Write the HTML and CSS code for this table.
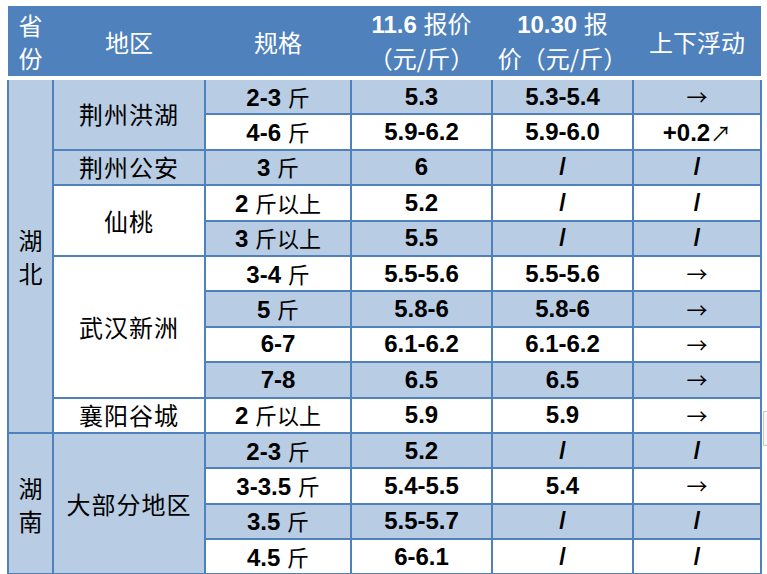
FILE: index.html
```html
<!DOCTYPE html>
<html lang="zh">
<head>
<meta charset="utf-8">
<title>报价表</title>
<link rel="stylesheet" href="styles.css">
</head>
<body>
<table class="price">
  <colgroup>
    <col class="c1"><col class="c2"><col class="c3"><col class="c4"><col class="c5"><col class="c6">
  </colgroup>
  <thead>
    <tr>
      <th class="cn">省<br>份</th>
      <th class="cn">地区</th>
      <th class="cn">规格</th>
      <th><b>11.6</b> <span class="cn">报价</span><br><span class="cn">（元/斤）</span></th>
      <th><b>10.30</b> <span class="cn">报</span><br><span class="cn">价（元/斤）</span></th>
      <th class="cn">上下浮动</th>
    </tr>
  </thead>
  <tbody>
    <tr class="b">
      <td rowspan="10" class="prov cn">湖<br>北</td>
      <td rowspan="2" class="area cn">荆州洪湖</td>
      <td>2-3 <span class="cn">斤</span></td><td>5.3</td><td>5.3-5.4</td><td><span class="arr">→</span></td>
    </tr>
    <tr class="w">
      <td>4-6 <span class="cn">斤</span></td><td>5.9-6.2</td><td>5.9-6.0</td><td>+0.2<span class="arr">↗</span></td>
    </tr>
    <tr class="b">
      <td class="area cn">荆州公安</td>
      <td>3 <span class="cn">斤</span></td><td>6</td><td>/</td><td>/</td>
    </tr>
    <tr class="w">
      <td rowspan="2" class="area wbg cn">仙桃</td>
      <td>2 <span class="cn">斤以上</span></td><td>5.2</td><td>/</td><td>/</td>
    </tr>
    <tr class="b">
      <td>3 <span class="cn">斤以上</span></td><td>5.5</td><td>/</td><td>/</td>
    </tr>
    <tr class="w">
      <td rowspan="4" class="area wbg cn">武汉新洲</td>
      <td>3-4 <span class="cn">斤</span></td><td>5.5-5.6</td><td>5.5-5.6</td><td><span class="arr">→</span></td>
    </tr>
    <tr class="b">
      <td>5 <span class="cn">斤</span></td><td>5.8-6</td><td>5.8-6</td><td><span class="arr">→</span></td>
    </tr>
    <tr class="w">
      <td>6-7</td><td>6.1-6.2</td><td>6.1-6.2</td><td><span class="arr">→</span></td>
    </tr>
    <tr class="b">
      <td>7-8</td><td>6.5</td><td>6.5</td><td><span class="arr">→</span></td>
    </tr>
    <tr class="w">
      <td class="area cn">襄阳谷城</td>
      <td>2 <span class="cn">斤以上</span></td><td>5.9</td><td>5.9</td><td><span class="arr">→</span></td>
    </tr>
    <tr class="b">
      <td rowspan="4" class="prov cn">湖<br>南</td>
      <td rowspan="4" class="area cn">大部分地区</td>
      <td>2-3 <span class="cn">斤</span></td><td>5.2</td><td>/</td><td>/</td>
    </tr>
    <tr class="w">
      <td>3-3.5 <span class="cn">斤</span></td><td>5.4-5.5</td><td>5.4</td><td><span class="arr">→</span></td>
    </tr>
    <tr class="b">
      <td>3.5 <span class="cn">斤</span></td><td>5.5-5.7</td><td>/</td><td>/</td>
    </tr>
    <tr class="w">
      <td>4.5 <span class="cn">斤</span></td><td>6-6.1</td><td>/</td><td>/</td>
    </tr>
  </tbody>
</table>
<div class="side-tab"></div>
</body>
</html>
```

FILE: styles.css
```css
html, body {
  margin: 0;
  padding: 0;
  background: #ffffff;
}

body {
  position: relative;
  width: 767px;
  height: 574px;
  overflow: hidden;
}

.price {
  margin: 6px 0 0 7px;
  width: 753px;
  table-layout: fixed;
  border-collapse: collapse;
  font-family: "Liberation Sans", Arial, "Noto Sans CJK SC", sans-serif;
  color: #000;
}

.c1 { width: 45px; }
.c2 { width: 152px; }
.c3 { width: 146px; }
.c4 { width: 141px; }
.c5 { width: 141px; }
.c6 { width: 128px; }

.price th {
  background: #4f81bd;
  color: #fff;
  height: 66px;
  padding: 0;
  font-size: 24px;
  line-height: 33px;
  font-weight: normal;
  text-align: center;
  vertical-align: middle;
  border: none;
  border-bottom: 4px solid #ffffff;
}

.price th b {
  font-weight: bold;
  font-size: 24px;
}

.cn {
  font-family: "Noto Sans CJK SC", "Liberation Sans", sans-serif;
  font-weight: normal;
}

.price th .cn {
  font-size: 24px;
}

.price td {
  border: 2px solid #4f81bd;
  height: 33.4px;
  padding: 0;
  text-align: center;
  vertical-align: middle;
  font-size: 24px;
  font-weight: bold;
  line-height: 26px;
}

.price td .cn {
  font-size: 22px;
  font-weight: normal;
}

.price td.cn {
  font-weight: normal;
}

.price tr.b td { background: #b8cce4; }
.price tr.w td { background: #ffffff; }

.price td.prov {
  background: #b8cce4;
  font-size: 24px;
  line-height: 33px;
}

.price td.area {
  font-size: 24px;
  letter-spacing: 1px;
}

.price tr td.wbg { background: #ffffff; }

.arr {
  font-family: "Noto Sans CJK SC", sans-serif;
  font-weight: normal;
  font-size: 21px;
}

.side-tab {
  position: absolute;
  left: 763px;
  top: 411px;
  width: 6px;
  height: 33px;
  border: 1px solid #c8c8c8;
  border-right: none;
  background: #f6f6f6;
}
```
